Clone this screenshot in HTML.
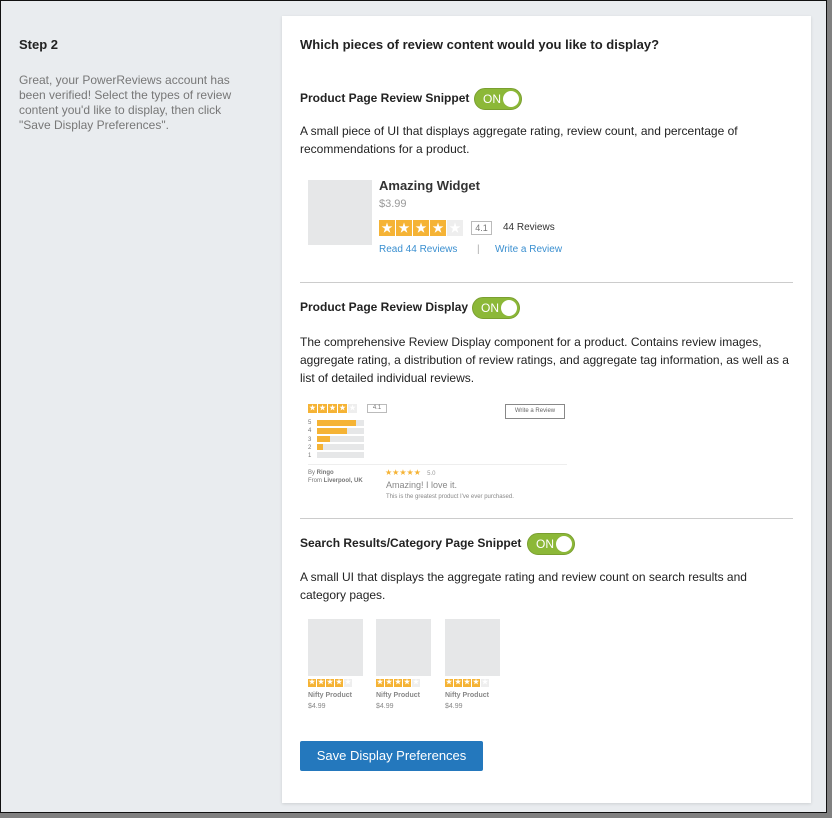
<!DOCTYPE html>
<html><head><style>
*{margin:0;padding:0;box-sizing:border-box}
body{width:832px;height:818px;background:#808080;font-family:"Liberation Sans",sans-serif;position:relative;overflow:hidden}
#win{position:absolute;left:0;top:0;width:827px;height:813px;background:#e9ecef;border:1px solid #111}
.a{position:absolute;white-space:nowrap}
#card{position:absolute;left:282px;top:16px;width:529px;height:787px;background:#fff;box-shadow:0 1px 3px rgba(0,0,0,.12)}
.t{font-size:12px;color:#222;line-height:18px}
.b{font-weight:bold;font-size:12px;color:#222}
.tog{position:absolute;width:48px;height:22px;border-radius:11px;background:#8cb838;border:1px solid #7a9f30}
.tog span{position:absolute;left:8px;top:0;line-height:20px;color:#fff;font-size:12px}
.tog i{position:absolute;right:2px;top:2px;width:16px;height:16px;border-radius:50%;background:#fff}
.hr{position:absolute;left:300px;width:493px;height:1px;background:#ccc}
.ph{position:absolute;background:#e6e7e8}
.st{position:absolute;display:flex;gap:1px}
.st b{display:block;background:#f5b335;color:#fff;text-align:center}
.st b.e{background:#eee}
</style></head><body>
<div id="win">
<div class="a" style="left:18px;top:36px;font-size:13px;font-weight:bold;color:#222">Step 2</div>
<div class="a" style="left:18px;top:72px;font-size:12px;line-height:15px;color:#777;white-space:normal;width:218px">Great, your PowerReviews account has been verified! Select the types of review content you'd like to display, then click "Save Display Preferences".</div>
</div>
<div id="card"></div>
<div class="a" style="left:300px;top:37px;font-size:13px;font-weight:bold;color:#222">Which pieces of review content would you like to display?</div>

<div class="a b" style="left:300px;top:91px">Product Page Review Snippet</div>
<div class="tog" style="left:474px;top:88px"><span>ON</span><i></i></div>
<div class="a t" style="left:300px;top:122px;white-space:normal;width:480px">A small piece of UI that displays aggregate rating, review count, and percentage of recommendations for a product.</div>
<div class="ph" style="left:308px;top:180px;width:64px;height:65px"></div>
<div class="a" style="left:379px;top:178px;font-size:13px;font-weight:bold;color:#333">Amazing Widget</div>
<div class="a" style="left:379px;top:198px;font-size:11px;color:#999">$3.99</div>
<div class="st" style="left:379px;top:220px"><b style="width:16px;height:16px;font-size:12px;line-height:16px">★</b><b style="width:16px;height:16px;font-size:12px;line-height:16px">★</b><b style="width:16px;height:16px;font-size:12px;line-height:16px">★</b><b style="width:16px;height:16px;font-size:12px;line-height:16px">★</b><b class="e" style="width:16px;height:16px;font-size:12px;line-height:16px">★</b></div>
<div class="a" style="left:471px;top:221px;width:21px;height:14px;border:1px solid #bbb;font-size:9px;color:#777;text-align:center;line-height:12px">4.1</div>
<div class="a" style="left:503px;top:222px;font-size:10px;color:#333">44 Reviews</div>
<div class="a" style="left:379px;top:244px;font-size:10px;color:#3a8fd0">Read 44 Reviews</div>
<div class="a" style="left:477px;top:244px;font-size:10px;color:#aaa">|</div>
<div class="a" style="left:495px;top:244px;font-size:10px;color:#3a8fd0">Write a Review</div>
<div class="hr" style="top:282px"></div>

<div class="a b" style="left:300px;top:300px">Product Page Review Display</div>
<div class="tog" style="left:472px;top:297px"><span>ON</span><i></i></div>
<div class="a t" style="left:300px;top:333px;white-space:normal;width:495px">The comprehensive Review Display component for a product. Contains review images, aggregate rating, a distribution of review ratings, and aggregate tag information, as well as a list of detailed individual reviews.</div>
<div class="st" style="left:308px;top:404px"><b style="width:9px;height:9px;font-size:7px;line-height:9px">★</b><b style="width:9px;height:9px;font-size:7px;line-height:9px">★</b><b style="width:9px;height:9px;font-size:7px;line-height:9px">★</b><b style="width:9px;height:9px;font-size:7px;line-height:9px">★</b><b class="e" style="width:9px;height:9px;font-size:7px;line-height:9px">★</b></div>
<div class="a" style="left:367px;top:404px;width:20px;height:9px;border:1px solid #bbb;font-size:6px;color:#777;text-align:center;line-height:7px">4.1</div>
<div class="a" style="left:505px;top:404px;width:60px;height:15px;border:1px solid #888;font-size:6px;color:#666;text-align:center;line-height:13px">Write a Review</div>
<div class="a" style="left:308px;top:419px;font-size:6px;color:#777;line-height:8.3px">5<br>4<br>3<br>2<br>1</div>
<div class="ph" style="left:317px;top:420px;width:47px;height:6px"></div><div class="a" style="left:317px;top:420px;width:39px;height:6px;background:#f5b335"></div>
<div class="ph" style="left:317px;top:428px;width:47px;height:6px"></div><div class="a" style="left:317px;top:428px;width:30px;height:6px;background:#f5b335"></div>
<div class="ph" style="left:317px;top:436px;width:47px;height:6px"></div><div class="a" style="left:317px;top:436px;width:13px;height:6px;background:#f5b335"></div>
<div class="ph" style="left:317px;top:444px;width:47px;height:6px"></div><div class="a" style="left:317px;top:444px;width:6px;height:6px;background:#f5b335"></div>
<div class="ph" style="left:317px;top:452px;width:47px;height:6px"></div>
<div class="a" style="left:308px;top:464px;width:259px;height:1px;background:#eee"></div>
<div class="a" style="left:308px;top:469px;font-size:6px;color:#777;line-height:8px">By <b>Ringo</b><br>From <b>Liverpool, UK</b></div>
<div class="a" style="left:385px;top:468px;font-size:8px;color:#f5b335">★★★★★ <span style="color:#999;font-size:6px;margin-left:4px">5.0</span></div>
<div class="a" style="left:386px;top:480px;font-size:9px;color:#888">Amazing! I love it.</div>
<div class="a" style="left:386px;top:494px;font-size:6px;color:#888">This is the greatest product I've ever purchased.</div>
<div class="hr" style="top:518px"></div>

<div class="a b" style="left:300px;top:536px">Search Results/Category Page Snippet</div>
<div class="tog" style="left:527px;top:533px"><span>ON</span><i></i></div>
<div class="a t" style="left:300px;top:568px;white-space:normal;width:480px">A small UI that displays the aggregate rating and review count on search results and category pages.</div>

<div class="ph" style="left:308px;top:619px;width:55px;height:57px"></div>
<div class="ph" style="left:376px;top:619px;width:55px;height:57px"></div>
<div class="ph" style="left:445px;top:619px;width:55px;height:57px"></div>
<div class="st" style="left:308px;top:679px"><b style="width:8px;height:8px;font-size:7px;line-height:8px">★</b><b style="width:8px;height:8px;font-size:7px;line-height:8px">★</b><b style="width:8px;height:8px;font-size:7px;line-height:8px">★</b><b style="width:8px;height:8px;font-size:7px;line-height:8px">★</b><b class="e" style="width:8px;height:8px;font-size:7px;line-height:8px">★</b></div>
<div class="st" style="left:376px;top:679px"><b style="width:8px;height:8px;font-size:7px;line-height:8px">★</b><b style="width:8px;height:8px;font-size:7px;line-height:8px">★</b><b style="width:8px;height:8px;font-size:7px;line-height:8px">★</b><b style="width:8px;height:8px;font-size:7px;line-height:8px">★</b><b class="e" style="width:8px;height:8px;font-size:7px;line-height:8px">★</b></div>
<div class="st" style="left:445px;top:679px"><b style="width:8px;height:8px;font-size:7px;line-height:8px">★</b><b style="width:8px;height:8px;font-size:7px;line-height:8px">★</b><b style="width:8px;height:8px;font-size:7px;line-height:8px">★</b><b style="width:8px;height:8px;font-size:7px;line-height:8px">★</b><b class="e" style="width:8px;height:8px;font-size:7px;line-height:8px">★</b></div>
<div class="a" style="left:308px;top:690px;font-size:7px;color:#888;line-height:11px"><b>Nifty Product</b><br>$4.99</div>
<div class="a" style="left:376px;top:690px;font-size:7px;color:#888;line-height:11px"><b>Nifty Product</b><br>$4.99</div>
<div class="a" style="left:445px;top:690px;font-size:7px;color:#888;line-height:11px"><b>Nifty Product</b><br>$4.99</div>

<div class="a" style="left:300px;top:741px;width:183px;height:30px;background:#2478bd;border-radius:2px;color:#fff;font-size:13px;text-align:center;line-height:30px">Save Display Preferences</div>
</body></html>
